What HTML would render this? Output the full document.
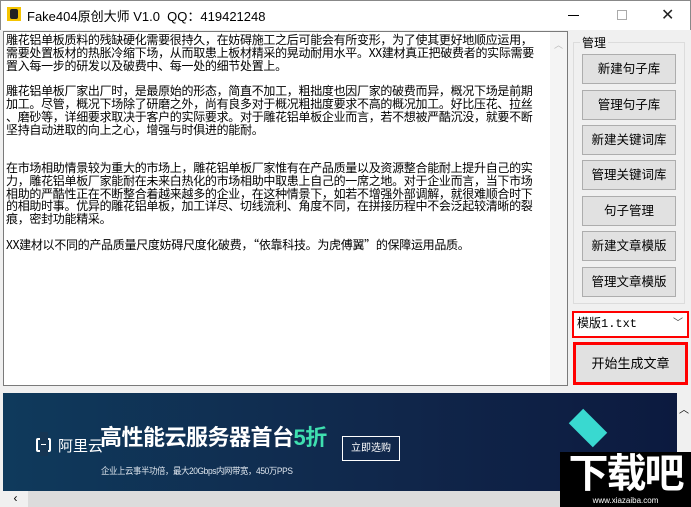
<!DOCTYPE html>
<html><head><meta charset="utf-8"><style>
*{margin:0;padding:0;box-sizing:border-box}
body{width:691px;height:507px;overflow:hidden;background:#f0f0f0;font-family:"Liberation Sans","Noto Sans CJK SC",sans-serif;position:relative}
.title{position:absolute;left:0;top:0;width:691px;height:30px;background:#fff;border:1px solid #888;border-bottom:none}
.title .t{position:absolute;left:26px;top:5px;font-size:13px;color:#000}
.ta{position:absolute;left:3px;top:31px;width:565px;height:355px;background:#fff;border:1px solid #7a7a7a;overflow:hidden}
.txt{position:absolute;left:2px;top:2px;font-family:"WenQuanYi Zen Hei","Noto Sans CJK SC",sans-serif;font-size:12px;line-height:12.8px;white-space:nowrap;letter-spacing:-0.3px;color:#000}
.sb{position:absolute;right:0;top:0;width:17px;height:100%;background:#f4f4f4}
.grp{position:absolute;left:573px;top:42px;width:112px;height:262px;border:1px solid #dcdcdc}
.gl{position:absolute;left:580px;top:34px;font-size:12px;background:#f0f0f0;padding:0 2px}
.btn{position:absolute;left:582px;width:94px;height:30px;background:#e1e1e1;border:1px solid #adadad;font-size:12.5px;text-align:center;line-height:28px}
.combo{position:absolute;left:572px;top:311px;width:117px;height:27px;border:2px solid #f00;background:#fff;font-size:12px;line-height:23px;padding-left:3px;font-family:"Liberation Mono","Noto Sans CJK SC",monospace}
.go{position:absolute;left:573px;top:342px;width:115px;height:43px;border:3px solid #f00;background:#e1e1e1;font-size:13px;text-align:center;line-height:37px}
.ban{position:absolute;left:3px;top:393px;width:674px;height:98px;background:linear-gradient(90deg,#0f3a5c,#10264a 60%,#0c1a3f);overflow:hidden}
.vs{position:absolute;left:677px;top:393px;width:14px;height:98px;background:#f0f0f0}
.hs{position:absolute;left:3px;top:491px;width:674px;height:16px;background:#dcdcdc}
.wm{position:absolute;left:560px;top:452px;width:131px;height:55px;background:#000;color:#fff;text-align:center}
</style></head><body>
<div class="title">
<div style="position:absolute;left:6px;top:6px;width:14px;height:14px;background:#f5c400"></div>
<div style="position:absolute;left:9px;top:8px;width:8px;height:10px;background:#222;border-radius:2px"></div>
<div class="t">Fake404原创大师 V1.0&nbsp; QQ：419421248</div>
<div style="position:absolute;left:567px;top:14px;width:11px;height:1px;background:#000"></div>
<div style="position:absolute;left:616px;top:9px;width:10px;height:10px;border:1px solid #aaa"></div>
<div style="position:absolute;left:660px;top:4px;font-size:16px;color:#222">✕</div>
</div>
<div class="ta"><div class="txt">雕花铝单板质料的残缺硬化需要很持久，在妨碍施工之后可能会有所变形，为了使其更好地顺应运用，<br>需要处置板材的热胀冷缩下场，从而取患上板材精采的晃动耐用水平。XX建材真正把破费者的实际需要<br>置入每一步的研发以及破费中、每一处的细节处置上。<br><br>雕花铝单板厂家出厂时，是最原始的形态，简直不加工，粗拙度也因厂家的破费而异，概况下场是前期<br>加工。尽管，概况下场除了研磨之外，尚有良多对于概况粗拙度要求不高的概况加工。好比压花、拉丝<br>、磨砂等，详细要求取决于客户的实际要求。对于雕花铝单板企业而言，若不想被严酷沉没，就要不断<br>坚持自动进取的向上之心，增强与时俱进的能耐。<br><br><br>在市场相助情景较为重大的市场上，雕花铝单板厂家惟有在产品质量以及资源整合能耐上提升自己的实<br>力，雕花铝单板厂家能耐在未来白热化的市场相助中取患上自己的一席之地。对于企业而言，当下市场<br>相助的严酷性正在不断整合着越来越多的企业，在这种情景下，如若不增强外部调解，就很难顺合时下<br>的相助时事。优异的雕花铝单板，加工详尽、切线流利、角度不同，在拼接历程中不会泛起较清晰的裂<br>痕，密封功能精采。<br><br>XX建材以不同的产品质量尺度妨碍尺度化破费，“依靠科技。为虎傅翼”的保障运用品质。</div>
<div class="sb"><div style="position:absolute;left:4px;top:6px;font-size:9px;color:#bbb">︿</div></div></div>
<div class="grp"></div><div class="gl">管理</div>
<div class="btn" style="top:54px">新建句子库</div>
<div class="btn" style="top:90px">管理句子库</div>
<div class="btn" style="top:125px">新建关键词库</div>
<div class="btn" style="top:160px">管理关键词库</div>
<div class="btn" style="top:196px">句子管理</div>
<div class="btn" style="top:231px">新建文章模版</div>
<div class="btn" style="top:267px">管理文章模版</div>
<div class="combo">模版1.txt<span style="position:absolute;right:4px;top:0;font-size:10px;color:#444">﹀</span></div>
<div class="go">开始生成文章</div>
<div class="ban">
<div style="position:absolute;left:33px;top:45px;width:15px;height:14px;border:2px solid #fff;border-radius:2px"></div>
<div style="position:absolute;left:37px;top:39px;width:8px;height:24px;background:#163553"></div>
<div style="position:absolute;left:38px;top:51px;width:5px;height:1px;background:#fff"></div>
<div style="position:absolute;left:55px;top:42px;color:#fff;font-size:15px">阿里云</div>
<div style="position:absolute;left:97px;top:31px;color:#fff;font-size:22px;font-weight:bold;letter-spacing:-0.5px;line-height:28px">高性能云服务器首台<span style="color:#3fe0b0">5折</span></div>
<div style="position:absolute;left:98px;top:71px;color:#dfe6ee;font-size:9px;letter-spacing:-0.4px;transform:scaleX(0.93);transform-origin:left">企业上云事半功倍，最大20Gbps内网带宽，450万PPS</div>
<div style="position:absolute;left:339px;top:43px;width:58px;height:25px;border:1px solid #fff;color:#fff;font-size:10px;text-align:center;line-height:23px">立即选购</div>
<div style="position:absolute;left:568px;top:18px;width:34px;height:34px;background:#39d9d0;transform:rotate(45deg) scaleY(0.6)"></div>
</div>
<div class="vs"><div style="position:absolute;left:2px;top:8px;font-size:10px">︿</div></div>
<div class="hs"><div style="position:absolute;left:0;top:0;width:25px;height:16px;background:#f0f0f0;font-size:12px;text-align:center">‹</div></div>
<div class="wm"><div style="font-size:40px;font-weight:bold;line-height:44px;letter-spacing:-2px">下载吧</div><div style="font-size:8px;line-height:10px">www.xiazaiba.com</div></div>
</body></html>
